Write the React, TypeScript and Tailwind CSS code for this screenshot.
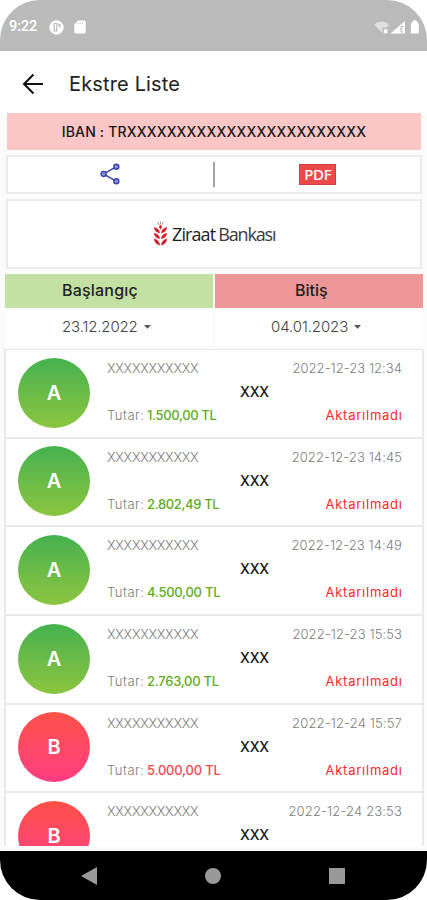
import React from "react";

type Entry = {
  kind: "A" | "B";
  amount?: string;
  date: string;
  amountClass?: string;
  dateClass: string;
};

const entries: Entry[] = [
  { kind: "A", amount: "1.500,00 TL", date: "2022-12-23 12:34", amountClass: "tracking-[-0.35px]", dateClass: "tracking-[0.05px]" },
  { kind: "A", amount: "2.802,49 TL", date: "2022-12-23 14:45", amountClass: "tracking-[-0.35px]", dateClass: "tracking-[0.1px]" },
  { kind: "A", amount: "4.500,00 TL", date: "2022-12-23 14:49", amountClass: "tracking-[-0.25px]", dateClass: "tracking-[0.1px]" },
  { kind: "A", amount: "2.763,00 TL", date: "2022-12-23 15:53", amountClass: "tracking-[-0.25px]", dateClass: "tracking-[0.1px]" },
  { kind: "B", amount: "5.000,00 TL", date: "2022-12-24 15:57", amountClass: "tracking-[-0.2px]", dateClass: "tracking-[0.15px]" },
  { kind: "B", date: "2022-12-24 23:53", dateClass: "tracking-[0.15px]" },
];

function StatusBar() {
  return (
    <div className="flex h-[51px] shrink-0 items-center bg-[#bababa] pt-[3px] pl-[9px] text-white">
      <span className="w-[29px] font-[Roboto] text-[14.5px] font-medium tracking-[-0.1px] whitespace-nowrap">9:22</span>
      <svg className="ml-[11px]" width="15" height="15" viewBox="0 0 15 15">
        <circle cx="7.5" cy="7.5" r="7.2" fill="#fff" />
        <path d="M5.200 3v8.500M5.200 3.500h2.600v7.500H5.200" stroke="#bababa" strokeWidth="1.2" fill="none" />
        <path d="M9.500 3.400a2.300 2.300 0 0 1 2 3.300H9.500z" fill="#bababa" />
      </svg>
      <svg className="ml-[10px]" width="12" height="14" viewBox="0 0 12 14">
        <path d="M4 0.5h6.5a1.2 1.2 0 0 1 1.2 1.2v10.6a1.2 1.2 0 0 1-1.2 1.2h-9A1.2 1.2 0 0 1 .3 12.3V4.2z" fill="#fff" />
        <path d="M4.5 2.500v1.500M6.5 2.500v1.500M8.5 2.500v1.500" stroke="#bababa" strokeWidth="0.8" />
      </svg>
      <svg className="ml-[287px]" width="50" height="17" viewBox="0 0 50 17">
        <path d="M1 5.500Q8.500-.5 16 5.500L13.800 8.500H9.500V14Z" fill="#dedede" />
        <rect x="10.800" y="10.300" width="3.600" height="4" fill="#fff" />
        <path d="M17.500 14.500L32 2V14.500Z" fill="#fff" />
        <path d="M30.500 7.500H28v5.500h2.500M28 10h2" stroke="#bababa" strokeWidth="1" fill="none" />
        <path d="M39.500 2.800l1-1.500h2.500l1 1.500 1.800 1.700v10h-8V4.500z" fill="#fff" />
      </svg>
    </div>
  );
}

function ZiraatMark() {
  return (
    <svg width="15" height="26" viewBox="0 0 15 26" className="shrink-0">
      <g fill="#d31f2a">
        <path d="M1 6Q6.500 7.500 7 12.200Q1.200 11.500 1 6Z" />
        <path d="M1 11.800Q6.500 13.300 7 18Q1.200 17.300 1 11.800Z" />
        <path d="M1 17.600Q6.500 19 7 24.500Q1.200 23.300 1 17.600Z" />
        <path d="M14 6Q8.500 7.500 8 12.200Q13.800 11.500 14 6Z" />
        <path d="M14 11.800Q8.500 13.300 8 18Q13.800 17.300 14 11.800Z" />
        <path d="M14 17.600Q8.500 19 8 24.500Q13.800 23.300 14 17.600Z" />
        <path d="M7.500 3.500L9.200 6L7.500 8.800L5.800 6Z" />
      </g>
      <path d="M4.500 1L6.500 4M10.500 1L8.500 4M7.500 0.500V3" stroke="#b88085" strokeWidth="0.9" />
    </svg>
  );
}

function EntryRow({ e }: { e: Entry }) {
  const green = e.kind === "A";
  return (
    <div className="flex h-[88.7px] shrink-0 border-x-2 border-y-[1.5px] border-[#e9e9e9] bg-white pl-[12px]">
      <div
        className={
          "mt-[7.5px] flex h-[70px] w-[72px] shrink-0 items-center justify-center rounded-[50%] bg-linear-to-b text-[20px] font-semibold text-white " +
          (green ? "from-[#43b14e] to-[#8bc53f]" : "from-[#ff5046] to-[#ff3d80]")
        }
      >
        {e.kind}
      </div>
      <div className="ml-[17px] flex w-[295px] flex-col pt-[8px] text-[13px] leading-[20px] text-[#7d7d7d]">
        <div className="flex justify-between font-light">
          <span className="tracking-[-0.3px]">XXXXXXXXXXX</span>
          <span className={e.dateClass}>{e.date}</span>
        </div>
        <div className="mt-[4px] h-5 text-center text-[14px] font-medium tracking-[-0.2px] text-[#161616]">XXX</div>
        {e.amount && (
          <div className="mt-[3px] flex justify-between">
            <div className="flex">
              <span className="w-[40px] font-light tracking-[0.5px]">Tutar:</span>
              <span className={"font-medium " + e.amountClass + (green ? " text-[#62ab20]" : " text-[#f6484b]")}>{e.amount}</span>
            </div>
            <span className="-mr-[0.7px] tracking-[0.75px] text-[#ff2929]">Aktarılmadı</span>
          </div>
        )}
      </div>
    </div>
  );
}

function Caret() {
  return (
    <svg width="7" height="4" viewBox="0 0 7 4" className="ml-[6px]">
      <path d="M0 0h7L3.500 3.800z" fill="#555" />
    </svg>
  );
}

export default function App() {
  return (
    <div className="h-[900px] w-[427px] overflow-hidden bg-white font-[Inter,sans-serif]">
      <div className="flex h-full flex-col overflow-hidden rounded-[40px] bg-[#fbfbfb]">
        <StatusBar />
        <div className="flex h-[62px] shrink-0 items-center bg-[#fefefe] pt-[4px] pl-[22px]">
          <svg width="22" height="22" viewBox="0 0 22 22" fill="none" stroke="#111" strokeWidth="2">
            <path d="M21 11H2M11.500 1.500L2 11l9.500 9.500" />
          </svg>
          <h1 className="ml-[25px] text-[20px] font-normal tracking-[0.15px] text-[#222]">Ekstre Liste</h1>
        </div>

        <div className="mr-[6px] ml-[7px] flex h-[37px] shrink-0 items-center justify-center bg-[#fbc6c6] text-[14px] font-medium text-[#161616]">
          <span className="tracking-[0.17px] whitespace-nowrap">IBAN : TRXXXXXXXXXXXXXXXXXXXXXXXX</span>
        </div>

        <div className="mr-[5px] ml-[6px] mt-[5px] flex h-[39px] shrink-0 items-center border-2 border-[#ebebeb] bg-white">
          <div className="flex flex-1 justify-center pb-px">
            <svg width="20" height="22" viewBox="0 0 20 22" fill="#8e94d8" stroke="#3f46ad" strokeWidth="1.5">
              <path d="M16.300 3.700L3.600 11l12.700 7.300" fill="none" />
              <circle cx="16.300" cy="3.700" r="2.500" />
              <circle cx="3.600" cy="11" r="2.500" />
              <circle cx="16.300" cy="18.300" r="2.500" />
            </svg>
          </div>
          <div className="h-[25px] w-[2px] bg-[#a3a3a3]" />
          <div className="flex flex-1 justify-center pl-px">
            <div className="flex h-[21px] w-[37px] items-center justify-center border border-[#c94344] bg-[#ec4a4b] font-['Noto_Sans'] text-[15px] font-medium tracking-[-0.3px] text-white">PDF</div>
          </div>
        </div>

        <div className="mr-[5px] ml-[6px] mt-[5px] flex h-[70px] shrink-0 items-center justify-center border-2 border-[#ebebeb] bg-white">
          <ZiraatMark />
          <span className="ml-[4px] flex w-[103px] items-baseline font-['Open_Sans'] text-[18px] whitespace-nowrap text-[#1c1c1c]">
            <span className="font-medium tracking-[-0.9px]">Ziraat</span>
            <span className="ml-[3px] font-normal tracking-[-1.15px] text-[#3a3a3a]">Bankası</span>
          </span>
        </div>

        <div className="mr-[4px] ml-[5px] mt-[5px] grid h-[72px] shrink-0 grid-cols-2 grid-rows-[34px_38px] gap-x-[2px] text-[#222]">
          <div className="flex items-center bg-[#c3e1a2] pb-[3px] pl-[57px] text-[16px] font-medium tracking-[0.2px]">Başlangıç</div>
          <div className="flex items-center bg-[#ee9799] pb-[3px] pl-[80px] text-[16px] font-medium">Bitiş</div>
          <div className="flex items-center bg-[#fefefe] pl-[57px] text-[15px] font-light tracking-[-0.15px] text-[#444]">
            23.12.2022
            <Caret />
          </div>
          <div className="flex items-center bg-[#fefefe] pl-[56px] text-[15px] font-light tracking-[-0.1px] text-[#444]">
            04.01.2023
            <Caret />
          </div>
        </div>

        <div className="mr-[3px] ml-[4px] mt-[3px] flex h-[497px] shrink-0 flex-col overflow-hidden">
          {entries.map((e) => (
            <EntryRow key={e.date} e={e} />
          ))}
        </div>

        <div className="mt-auto flex h-[49px] shrink-0 items-center justify-between bg-black pr-[82px] pl-[81px]">
          <svg width="16" height="18" viewBox="0 0 16 18">
            <path d="M16 0v18L0 9z" fill="#999" />
          </svg>
          <div className="h-[16px] w-[16px] rounded-full bg-[#999]" />
          <div className="h-[16px] w-[16px] bg-[#999]" />
        </div>
      </div>
    </div>
  );
}
